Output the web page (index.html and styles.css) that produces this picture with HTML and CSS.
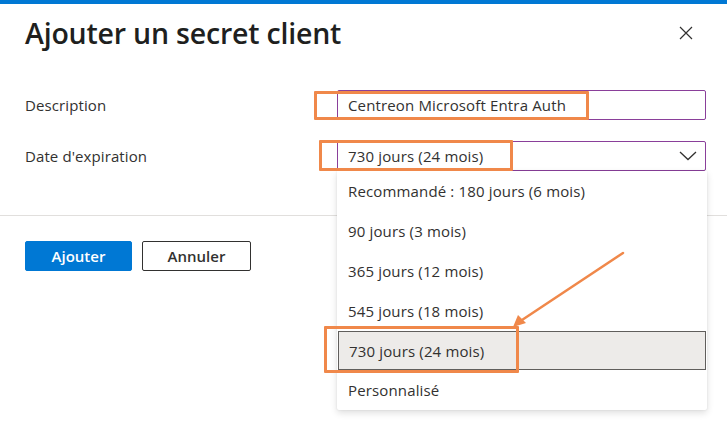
FILE: index.html
```html
<!DOCTYPE html>
<html lang="fr">
<head>
<meta charset="utf-8">
<link rel="stylesheet" href="styles.css">
</head>
<body>
<div class="page">
  <div class="topbar"></div>
  <header class="header">
    <h1 class="title">Ajouter un secret client</h1>
    <button class="close" aria-label="Fermer">
      <svg width="14" height="14" viewBox="0 0 14 14"><path d="M1 1 L13 13 M13 1 L1 13" stroke="#323130" stroke-width="1.2" fill="none"/></svg>
    </button>
  </header>
  <div class="form">
    <div class="row">
      <label class="label">Description</label>
      <div class="field"><span class="value">Centreon Microsoft Entra Auth</span></div>
    </div>
    <div class="row">
      <label class="label">Date d'expiration</label>
      <div class="field select">
        <span class="value">730 jours (24 mois)</span>
        <svg class="chevron" width="18" height="10" viewBox="0 0 18 10"><path d="M1 1 L9 8.5 L17 1" stroke="#323130" stroke-width="1.3" fill="none"/></svg>
        <ul class="menu">
          <li class="item">Recommandé : 180 jours (6 mois)</li>
          <li class="item">90 jours (3 mois)</li>
          <li class="item">365 jours (12 mois)</li>
          <li class="item">545 jours (18 mois)</li>
          <li class="item selected">730 jours (24 mois)</li>
          <li class="item">Personnalisé</li>
        </ul>
      </div>
    </div>
  </div>
  <div class="divider"></div>
  <div class="actions">
    <button class="btn primary">Ajouter</button>
    <button class="btn secondary">Annuler</button>
  </div>

  <div class="annot box1"></div>
  <div class="annot box2"></div>
  <div class="annot box3"></div>
  <svg class="arrow" width="727" height="433" viewBox="0 0 727 433">
    <line x1="623" y1="253" x2="522" y2="320" stroke="#f0884a" stroke-width="2.5" stroke-linecap="round"/>
    <path d="M513 327 L518 315 L526 323 Z" fill="#f0884a"/>
  </svg>
</div>
</body>
</html>
```

FILE: styles.css
```css
* { box-sizing: border-box; }
html, body { margin: 0; padding: 0; background: #fff; }
body {
  font-family: "Open Sans", "Noto Sans", "Liberation Sans", sans-serif;
  color: #323130;
  width: 727px;
  height: 433px;
  overflow: hidden;
}
.page { position: relative; width: 727px; height: 433px; }
.topbar { height: 4px; background: #0078d4; }
.header {
  display: flex;
  justify-content: space-between;
  align-items: center;
  padding: 0 34px 0 25px;
  height: 58px;
}
.title {
  margin: 0;
  font-size: 28.5px;
  font-weight: 600;
  color: #201f1e;
  letter-spacing: -0.2px;
  line-height: 1;
}
.close {
  border: 0;
  background: none;
  padding: 0;
  width: 14px;
  height: 14px;
  display: flex;
}
.form {
  display: flex;
  flex-direction: column;
  gap: 21px;
  padding: 28px 0 0 25px;
}
.row {
  display: grid;
  grid-template-columns: 312px 369px;
  align-items: center;
}
.label { font-size: 15px; color: #323130; letter-spacing: 0.1px; }
.field {
  position: relative;
  height: 30px;
  border: 1px solid #8a3f9a;
  border-radius: 2px;
  display: flex;
  align-items: center;
  padding-left: 10px;
  font-size: 15px;
  letter-spacing: 0.15px;
  color: #323130;
}
.select { justify-content: space-between; padding-right: 8px; }
.chevron { display: block; }
.menu {
  position: absolute;
  top: 29px;
  left: -1px;
  width: 370px;
  margin: 0;
  padding: 0;
  list-style: none;
  background: #fff;
  box-shadow: 0 3px 7px rgba(0,0,0,0.13), 0 0 2px rgba(0,0,0,0.1);
  border-radius: 0 0 2px 2px;
  z-index: 2;
}
.item {
  height: 40px;
  display: flex;
  align-items: center;
  padding-left: 11px;
  font-size: 15px;
  letter-spacing: 0.15px;
  color: #323130;
}
.item.selected {
  background: #edebe9;
  border: 1px solid #605e5c;
  margin: 0 1px;
  padding-left: 10px;
  height: 39px;
}
.divider {
  margin-top: 44px;
  height: 1px;
  background: #e1dfdd;
}
.actions {
  display: flex;
  gap: 10px;
  padding: 25px 0 0 25px;
}
.btn {
  height: 30px;
  border-radius: 2px;
  font-family: inherit;
  font-size: 15px;
  font-weight: 600;
  cursor: pointer;
}
.primary {
  width: 107px;
  background: #0078d4;
  border: 1px solid #0078d4;
  color: #fff;
}
.secondary {
  width: 109px;
  background: #fff;
  border: 1px solid #323130;
  color: #323130;
}
.annot {
  position: absolute;
  border: 3px solid #f0884a;
  border-radius: 1px;
  z-index: 5;
}
.box1 { left: 314px; top: 91px; width: 275px; height: 29px; }
.box2 { left: 319px; top: 140px; width: 194px; height: 31px; }
.box3 { left: 324px; top: 326px; width: 195px; height: 47px; }
.arrow { position: absolute; left: 0; top: 0; z-index: 6; pointer-events: none; }
```
